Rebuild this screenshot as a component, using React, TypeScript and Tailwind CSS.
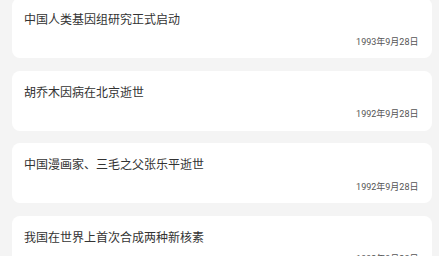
import React from "react";

const items = [
  { title: "中国人类基因组研究正式启动", date: "1993年9月28日" },
  { title: "胡乔木因病在北京逝世", date: "1992年9月28日" },
  { title: "中国漫画家、三毛之父张乐平逝世", date: "1992年9月28日" },
  { title: "我国在世界上首次合成两种新核素", date: "1992年9月28日" },
];

export default function App() {
  return (
    <div
      className="w-[439px] h-[256px] overflow-hidden bg-[#f4f4f4]"
      style={{ fontFamily: '"Noto Sans CJK SC", "Noto Sans", sans-serif' }}
    >
      <div className="flex flex-col gap-[12.5px] mt-[-2px] ml-[11.5px] mr-[7.5px]">
        {items.map((it, i) => (
          <div
            key={i}
            className="h-[60px] shrink-0 bg-white rounded-[8px] flex flex-col justify-between pt-[13px] pb-[10.5px] pl-[12.5px] pr-[13px]"
          >
            <div className="text-[12px] leading-[16px] text-[#333333]">{it.title}</div>
            <div className="text-[9px] leading-[12px] text-[#555555] text-right font-['Roboto','Noto_Sans_CJK_SC',sans-serif]">
              {it.date}
            </div>
          </div>
        ))}
      </div>
    </div>
  );
}
